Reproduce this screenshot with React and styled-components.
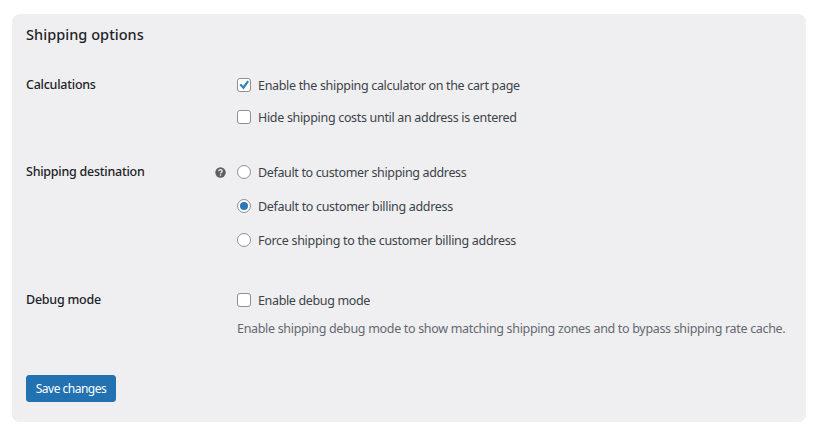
import React from "react";
import styled, { createGlobalStyle } from "styled-components";

const GlobalStyle = createGlobalStyle`
  *, *::before, *::after { box-sizing: border-box; }
  body { margin: 0; background: #fff; }
  body, button {
    font-family: "Segoe UI", "Noto Sans", "Open Sans", sans-serif;
    font-size: 12.5px;
    line-height: 18px;
    color: #3c434a;
  }
`;

const Page = styled.main`
  height: 436px;
  padding: 14px 12px;
  overflow: hidden;
`;

const Panel = styled.form`
  width: 794px;
  height: 408px;
  padding: 0 14px;
  border-radius: 8px;
  background: #efeff1;
  box-shadow: inset -3px -3px 0 #f1f1f2;
  white-space: nowrap;
`;

const Title = styled.h2`
  margin: 0;
  padding-top: 10px;
  height: 61px;
  font-size: 14.5px;
  line-height: 20px;
  font-weight: 500;
  letter-spacing: 0.05px;
  color: #1d2327;
`;

const SettingRow = styled.section`
  display: grid;
  grid-template-columns: 189px 22px 1fr;
  height: ${(p) => p.$height}px;
`;

const SettingName = styled.h3`
  margin: 0;
  padding-top: 1px;
  font-size: 12.5px;
  line-height: 18px;
  font-weight: 500;
  letter-spacing: -0.25px;
  color: #1d2327;
`;

const HelpSlot = styled.span`
  padding-top: 5px;
  height: 18px;
  line-height: 0;
`;

const Choices = styled.div`
  display: flex;
  flex-direction: column;
  gap: ${(p) => p.$gap}px;
  padding-top: 1px;
`;

const Choice = styled.label`
  display: flex;
  align-items: center;
  gap: 7px;
  height: 18px;
`;

const ChoiceText = styled.span`
  padding-top: 2px;
  letter-spacing: ${(p) => p.$tracking}px;
`;

const Control = styled.input`
  appearance: none;
  display: grid;
  place-items: center;
  flex: none;
  width: 14px;
  height: 14px;
  margin: 0;
  border: 1px solid #8c8f94;
  background: #fff;
`;

const CheckboxFrame = styled.span`
  display: grid;
  width: 14px;
  height: 14px;
  & > * { grid-area: 1 / 1; }
`;

const CheckboxControl = styled(Control)`
  border-radius: 3px;
`;

const RadioControl = styled(Control)`
  border-radius: 50%;
  &:checked::before {
    content: "";
    width: 8px;
    height: 8px;
    border-radius: 50%;
    background: #2b79b4;
  }
`;

const Description = styled.p`
  margin: 0;
  padding-top: 1px;
  letter-spacing: -0.32px;
  color: #646970;
`;

const SaveButton = styled.button`
  width: 90px;
  height: 27px;
  padding: 1px 0 0;
  border: 1px solid #2271b1;
  border-radius: 3px;
  background: #2271b1;
  color: #fff;
  font-size: 12px;
  letter-spacing: -0.5px;
`;

function HelpIcon() {
  return (
    <svg width="11" height="11" viewBox="0 0 11 11" aria-label="Help">
      <circle cx="5.5" cy="5.5" r="5.2" fill="#5f5f61" />
      <path d="M3.8 4.3C3.8 2.1 7.2 2.1 7.2 4.2C7.2 5.3 5.6 5.3 5.6 6.5" fill="none" stroke="#f4f4f5" strokeWidth="1.3" />
      <rect x="4.9" y="7.4" width="1.4" height="1.3" fill="#f4f4f5" />
    </svg>
  );
}

function Checkbox({ checked = false, tracking = -0.32, children }) {
  return (
    <Choice>
      <CheckboxFrame>
        <CheckboxControl type="checkbox" defaultChecked={checked} />
        {checked && (
          <svg width="14" height="14" viewBox="0 0 14 14">
            <path d="M2.4 7L4.2 5.7L6.2 8L10.3 2.5L12 3.8L6.6 11.4Z" fill="#3582b8" />
          </svg>
        )}
      </CheckboxFrame>
      <ChoiceText $tracking={tracking}>{children}</ChoiceText>
    </Choice>
  );
}

function Radio({ checked = false, tracking = -0.32, children }) {
  return (
    <Choice>
      <RadioControl type="radio" name="destination" defaultChecked={checked} />
      <ChoiceText $tracking={tracking}>{children}</ChoiceText>
    </Choice>
  );
}

export default function App() {
  return (
    <>
      <GlobalStyle />
      <Page>
        <Panel>
          <Title>Shipping options</Title>
          <SettingRow $height={87}>
            <SettingName>Calculations</SettingName>
            <HelpSlot />
            <Choices $gap={14}>
              <Checkbox checked>Enable the shipping calculator on the cart page</Checkbox>
              <Checkbox>Hide shipping costs until an address is entered</Checkbox>
            </Choices>
          </SettingRow>
          <SettingRow $height={128}>
            <SettingName>Shipping destination</SettingName>
            <HelpSlot><HelpIcon /></HelpSlot>
            <Choices $gap={16}>
              <Radio tracking={-0.35}>Default to customer shipping address</Radio>
              <Radio checked>Default to customer billing address</Radio>
              <Radio tracking={-0.3}>Force shipping to the customer billing address</Radio>
            </Choices>
          </SettingRow>
          <SettingRow $height={85}>
            <SettingName>Debug mode</SettingName>
            <HelpSlot />
            <Choices $gap={10}>
              <Checkbox tracking={-0.35}>Enable debug mode</Checkbox>
              <Description>
                Enable shipping debug mode to show matching shipping zones and to bypass shipping rate cache.
              </Description>
            </Choices>
          </SettingRow>
          <SaveButton type="button">Save changes</SaveButton>
        </Panel>
      </Page>
    </>
  );
}
